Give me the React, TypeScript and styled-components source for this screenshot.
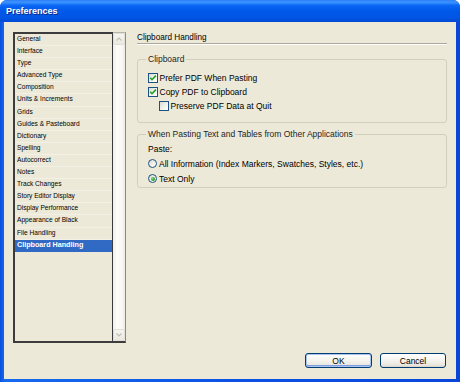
import React from "react";
import styled, { createGlobalStyle } from "styled-components";

const Global = createGlobalStyle`
  html, body { margin: 0; padding: 0; background: #ffffff; }
  body { font-family: "Liberation Sans", Arial, sans-serif; }
  * { box-sizing: border-box; }
`;

const Window = styled.div`
  width: 460px;
  height: 382px;
  display: flex;
  flex-direction: column;
  border-radius: 7px 7px 0 0;
  overflow: hidden;
  background: linear-gradient(to right, #0a4fdf 0%, #166aee 1%, #0b52e4 50%, #0846d8 100%);
`;

const TitleBar = styled.div`
  flex: none;
  height: 22px;
  display: flex;
  align-items: center;
  padding: 0 0 1px 6px;
  background: linear-gradient(
    to bottom,
    #2f7df7 0%,
    #3d95ff 10%,
    #0a66f5 25%,
    #0058e8 50%,
    #0055e5 80%,
    #0049d4 100%
  );
  color: #ffffff;
  font-weight: bold;
  font-size: 9px;
  text-shadow: 1px 1px 0 #0a2a8a;
`;

const Frame = styled.div`
  flex: 1;
  display: flex;
  flex-direction: column;
  margin: 0 4px 3px 4px;
  padding: 10px 9px 11px 9px;
  background: #ece9d8;
`;

const Main = styled.div`
  display: flex;
  gap: 11px;
  height: 311px;
`;

const ListFrame = styled.div`
  width: 113px;
  flex: none;
  display: flex;
`;

const ListPane = styled.ul`
  flex: 1;
  margin: 0;
  padding: 0;
  list-style: none;
  border: 2px solid #3c3c3c;
  border-right-width: 1px;
  background: #ece9d8;
`;

const ListItem = styled.li<{ $selected?: boolean }>`
  height: 12.1px;
  line-height: 10.5px;
  padding-left: 2px;
  font-size: ${(p) => (p.$selected ? "7.2px" : "6.6px")};
  font-weight: ${(p) => (p.$selected ? "bold" : "normal")};
  color: ${(p) => (p.$selected ? "#ffffff" : "#000000")};
  background: ${(p) => (p.$selected ? "#316ac5" : "transparent")};
  border-bottom: 1px solid ${(p) => (p.$selected ? "#316ac5" : "#f3f1e6")};
  white-space: nowrap;
`;

const ScrollBar = styled.div`
  width: 13px;
  flex: none;
  display: flex;
  flex-direction: column;
  justify-content: space-between;
  border-top: 1px solid #b8b6ab;
  border-right: 1px solid #8a8a85;
  border-bottom: 2px solid #3c3c3c;
  background: linear-gradient(to right, #f1efe6 0%, #fdfdfb 35%, #f7f6f1 80%, #e9e7de 100%);
`;

const ScrollButton = styled.div`
  width: 12px;
  height: 12px;
  display: flex;
  align-items: center;
  justify-content: center;
  border: 1px solid #e2e0d6;
  border-radius: 2px;
  background: linear-gradient(to bottom, #f6f5f0, #ebe9e1);
`;

const RightPanel = styled.div`
  flex: 1;
  display: flex;
  flex-direction: column;
`;

const Heading = styled.div`
  height: 12px;
  line-height: 11px;
  font-size: 8.2px;
  color: #000;
  border-bottom: 1px solid #aca899;
  box-shadow: 0 1px 0 #ffffff;
`;

const Group = styled.fieldset<{ $top: number }>`
  margin: ${(p) => p.$top}px 0 0 0;
  min-width: 0;
  border: 1px solid #d0d0bf;
  border-radius: 3px;
  padding: 0 8px 0 10px;
`;

const Legend = styled.legend`
  font-size: 8.5px;
  line-height: 10px;
  padding: 0 2px;
  margin-left: -2px;
  color: #1e1e1e;
`;

const Rows = styled.div<{ $top: number; $bottom: number }>`
  display: flex;
  flex-direction: column;
  padding: ${(p) => p.$top}px 0 ${(p) => p.$bottom}px 0;
`;

const Row = styled.div<{ $h: number; $indent?: number }>`
  height: ${(p) => p.$h}px;
  display: flex;
  align-items: center;
  gap: 1.5px;
  padding-left: ${(p) => p.$indent || 0}px;
  font-size: 8.5px;
  color: #000;
  white-space: nowrap;
`;

const CheckBox = styled.span`
  width: 10px;
  height: 10px;
  flex: none;
  display: flex;
  align-items: center;
  justify-content: center;
  border: 1px solid #1c5180;
  background: linear-gradient(135deg, #dcdcd4 0%, #f4f4f0 60%, #ffffff 100%);
`;

const Radio = styled.span`
  width: 9px;
  height: 9px;
  flex: none;
  display: flex;
  align-items: center;
  justify-content: center;
  border: 1px solid #1c5180;
  border-radius: 50%;
  margin-right: 0.5px;
  background: linear-gradient(135deg, #d8d7cf 0%, #f4f4f0 60%, #ffffff 100%);
`;

const RadioDot = styled.span`
  width: 4px;
  height: 4px;
  border-radius: 50%;
  background: radial-gradient(circle at 35% 35%, #7fe07f 0%, #2aa52a 55%, #177a17 100%);
`;

const Footer = styled.div`
  margin-top: 10px;
  height: 15px;
  display: flex;
  justify-content: flex-end;
  gap: 8px;
  padding-right: 1px;
`;

const Button = styled.button<{ $default?: boolean; $w: number }>`
  width: ${(p) => p.$w}px;
  height: 15px;
  padding: 0;
  border: 1px solid #003c74;
  border-radius: 3px;
  font-family: "Liberation Sans", Arial, sans-serif;
  font-size: 8.5px;
  color: #000;
  background: linear-gradient(to bottom, #ffffff 0%, #f4f3ee 50%, #e9e7df 85%, #d8d3c6 100%);
  box-shadow: ${(p) =>
    p.$default ? "inset 0 0 0 1px #a9c3ef, inset 0 -1px 0 1px #7d9ce3" : "none"};
`;

const items = [
  "General",
  "Interface",
  "Type",
  "Advanced Type",
  "Composition",
  "Units & Increments",
  "Grids",
  "Guides & Pasteboard",
  "Dictionary",
  "Spelling",
  "Autocorrect",
  "Notes",
  "Track Changes",
  "Story Editor Display",
  "Display Performance",
  "Appearance of Black",
  "File Handling",
  "Clipboard Handling",
];

const Check = ({ checked }: { checked: boolean }) => (
  <CheckBox>
    {checked && (
      <svg width="8" height="8" viewBox="0 0 8 8">
        <path d="M1.2 3.8 L3 5.7 L6.9 1.6" fill="none" stroke="#21a121" strokeWidth="1.6" />
      </svg>
    )}
  </CheckBox>
);

const RadioButton = ({ checked }: { checked: boolean }) => (
  <Radio>{checked && <RadioDot />}</Radio>
);

const Chevron = ({ up }: { up: boolean }) => (
  <svg width="6" height="4" viewBox="0 0 6 4">
    <path
      d={up ? "M0.5 3.5 L3 1 L5.5 3.5" : "M0.5 0.5 L3 3 L5.5 0.5"}
      fill="none"
      stroke="#c3c1b6"
      strokeWidth="1.2"
    />
  </svg>
);

export default function App() {
  return (
    <>
      <Global />
      <Window>
        <TitleBar>Preferences</TitleBar>
        <Frame>
          <Main>
            <ListFrame>
              <ListPane>
                {items.map((it) => (
                  <ListItem key={it} $selected={it === "Clipboard Handling"}>
                    {it}
                  </ListItem>
                ))}
              </ListPane>
              <ScrollBar>
                <ScrollButton>
                  <Chevron up />
                </ScrollButton>
                <ScrollButton>
                  <Chevron up={false} />
                </ScrollButton>
              </ScrollBar>
            </ListFrame>
            <RightPanel>
              <Heading>Clipboard Handling</Heading>
              <Group $top={10}>
                <Legend>Clipboard</Legend>
                <Rows $top={7} $bottom={9}>
                  <Row $h={14}>
                    <Check checked />
                    Prefer PDF When Pasting
                  </Row>
                  <Row $h={14}>
                    <Check checked />
                    Copy PDF to Clipboard
                  </Row>
                  <Row $h={14} $indent={11}>
                    <Check checked={false} />
                    Preserve PDF Data at Quit
                  </Row>
                </Rows>
              </Group>
              <Group $top={6}>
                <Legend>When Pasting Text and Tables from Other Applications</Legend>
                <Rows $top={2} $bottom={1}>
                  <Row $h={15}>Paste:</Row>
                  <Row $h={15}>
                    <RadioButton checked={false} />
                    All Information (Index Markers, Swatches, Styles, etc.)
                  </Row>
                  <Row $h={15}>
                    <RadioButton checked />
                    Text Only
                  </Row>
                </Rows>
              </Group>
            </RightPanel>
          </Main>
          <Footer>
            <Button $default $w={67}>
              OK
            </Button>
            <Button $w={66}>Cancel</Button>
          </Footer>
        </Frame>
      </Window>
    </>
  );
}
